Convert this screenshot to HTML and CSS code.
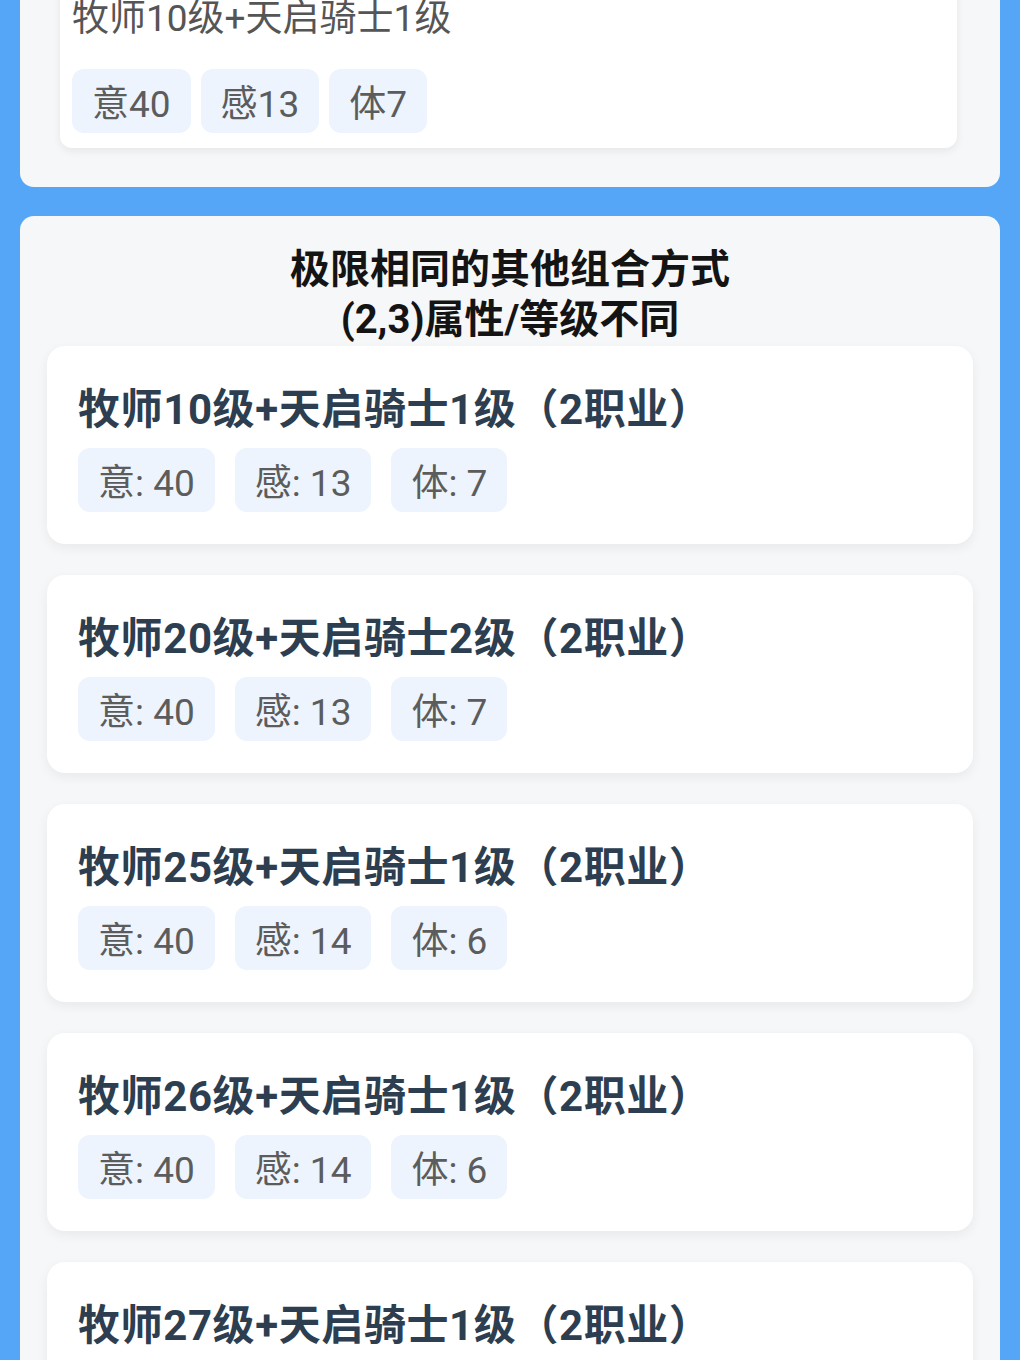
FILE: index.html
```html
<!DOCTYPE html>
<html lang="zh-CN">
<head>
<meta charset="utf-8">
<title>职业组合</title>
<link rel="stylesheet" href="styles.css">
</head>
<body>
<div class="page">
  <section class="panel panel-current">
    <div class="current-card">
      <div class="current-name">牧师10级+天启骑士1级</div>
      <div class="tags tags-small">
        <span class="tag">意40</span>
        <span class="tag">感13</span>
        <span class="tag">体7</span>
      </div>
    </div>
  </section>

  <section class="panel panel-alt">
    <h2 class="alt-title">极限相同的其他组合方式<br>(2,3)属性/等级不同</h2>
    <div class="combo-list">
      <div class="combo">
        <div class="combo-name">牧师10级+天启骑士1级（2职业）</div>
        <div class="tags">
          <span class="tag">意: 40</span>
          <span class="tag">感: 13</span>
          <span class="tag">体: 7</span>
        </div>
      </div>
      <div class="combo">
        <div class="combo-name">牧师20级+天启骑士2级（2职业）</div>
        <div class="tags">
          <span class="tag">意: 40</span>
          <span class="tag">感: 13</span>
          <span class="tag">体: 7</span>
        </div>
      </div>
      <div class="combo">
        <div class="combo-name">牧师25级+天启骑士1级（2职业）</div>
        <div class="tags">
          <span class="tag">意: 40</span>
          <span class="tag">感: 14</span>
          <span class="tag">体: 6</span>
        </div>
      </div>
      <div class="combo">
        <div class="combo-name">牧师26级+天启骑士1级（2职业）</div>
        <div class="tags">
          <span class="tag">意: 40</span>
          <span class="tag">感: 14</span>
          <span class="tag">体: 6</span>
        </div>
      </div>
      <div class="combo">
        <div class="combo-name">牧师27级+天启骑士1级（2职业）</div>
        <div class="tags">
          <span class="tag">意: 40</span>
          <span class="tag">感: 14</span>
          <span class="tag">体: 6</span>
        </div>
      </div>
    </div>
  </section>
</div>
</body>
</html>
```

FILE: styles.css
```css
html, body {
  margin: 0;
  padding: 0;
}

body {
  background: #56a6f8;
  font-family: Roboto, "Noto Sans CJK SC", sans-serif;
  overflow: hidden;
  height: 1360px;
}

.page {
  padding: 0 20px;
}

.panel {
  background: #f6f7f8;
  border-radius: 14px;
}

/* current build summary, scrolled partly out of view */
.panel-current {
  margin-top: -60px;
  padding: 0 43px 39px 40px;
  border-top-left-radius: 0;
  border-top-right-radius: 0;
}

.current-card {
  background: #ffffff;
  border-radius: 0 0 12px 12px;
  box-shadow: 0 3px 8px rgba(0, 0, 0, 0.07);
  padding: 52px 12px 15px 12px;
}

.current-name {
  font-size: 37px;
  line-height: 53px;
  color: #555555;
}

.tags {
  display: flex;
  gap: 20px;
  margin-top: 10px;
}

.tags-small {
  gap: 10px;
  margin-top: 24px;
}

.tag {
  display: inline-flex;
  align-items: center;
  height: 64px;
  padding: 0 20px;
  background: #edf4fd;
  border-radius: 12px;
  font-size: 37px;
  color: #5c5c5c;
}

/* alternative combinations */
.panel-alt {
  margin-top: 29px;
  padding: 29px 27px 40px 27px;
}

.alt-title {
  margin: 0;
  text-align: center;
  font-size: 40px;
  line-height: 50px;
  font-weight: 700;
  color: #141414;
  padding-bottom: 1px;
}

.combo-list {
  display: flex;
  flex-direction: column;
  gap: 31px;
}

.combo {
  background: #ffffff;
  border-radius: 18px;
  box-shadow: 0 4px 12px rgba(0, 0, 0, 0.06);
  padding: 35px 31px 32px 31px;
}

.combo-name {
  font-size: 42px;
  line-height: 57px;
  letter-spacing: 0.6px;
  font-weight: 700;
  color: #2c3e50;
}
```
